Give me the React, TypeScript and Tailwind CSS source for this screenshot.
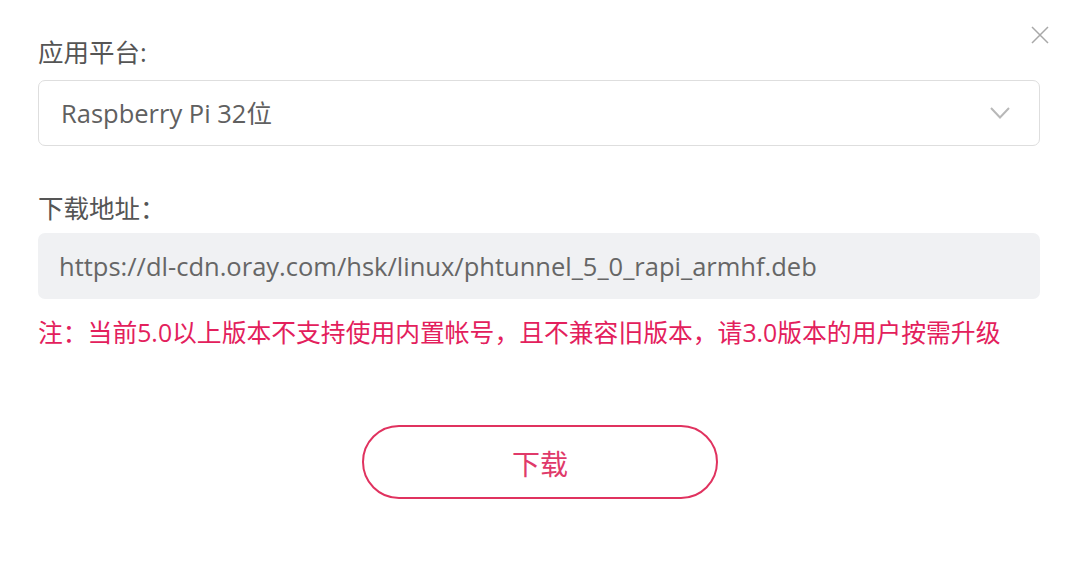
import React from "react";

export default function App() {
  const font = { fontFamily: '"Open Sans", "Noto Sans CJK SC", sans-serif' };
  return (
    <div className="w-[1080px] h-[585px] bg-white relative" style={font}>
      <button className="absolute left-[1031px] top-[26px] w-[18px] h-[18px]">
        <svg width="18" height="18" viewBox="0 0 18 18" fill="none">
          <path d="M1 1L17 17M17 1L1 17" stroke="#a8a8a8" strokeWidth="1.5" />
        </svg>
      </button>
      <div className="flex flex-col pl-[38px] pr-[40px] pt-[36px] w-[1080px]">
        <div className="text-[25.5px] leading-[32px] text-[#555555]">应用平台:</div>
        <div className="mt-[12px] h-[66px] border border-[#dedede] rounded-[7px] flex items-center justify-between pl-[22px] pr-[29px]">
          <span className="text-[25.5px] text-[#606060]">Raspberry Pi 32位</span>
          <svg width="20" height="12" viewBox="0 0 20 12" fill="none">
            <path d="M1 1L10 10.5L19 1" stroke="#b8b8b8" strokeWidth="2" />
          </svg>
        </div>
        <div className="mt-[46px] text-[25.5px] leading-[32px] text-[#555555]">下载地址：</div>
        <div className="mt-[9px] h-[66px] bg-[#f0f1f3] rounded-[7px] flex items-center pl-[21px]">
          <span className="text-[25.5px] text-[#666666]">https://dl-cdn.oray.com/hsk/linux/phtunnel_5_0_rapi_armhf.deb</span>
        </div>
        <div className="mt-[16px] text-[24.8px] leading-[34px] text-[#e3205c] whitespace-nowrap">
          注：当前5.0以上版本不支持使用内置帐号，且不兼容旧版本，请3.0版本的用户按需升级
        </div>
        <div className="flex justify-center mt-[76px] pl-[2px]">
          <button className="w-[356px] h-[74px] rounded-full border-2 border-[#e0325f] text-[#e03a6a] text-[28px] flex items-center justify-center pt-[4px]">
            下载
          </button>
        </div>
      </div>
    </div>
  );
}
